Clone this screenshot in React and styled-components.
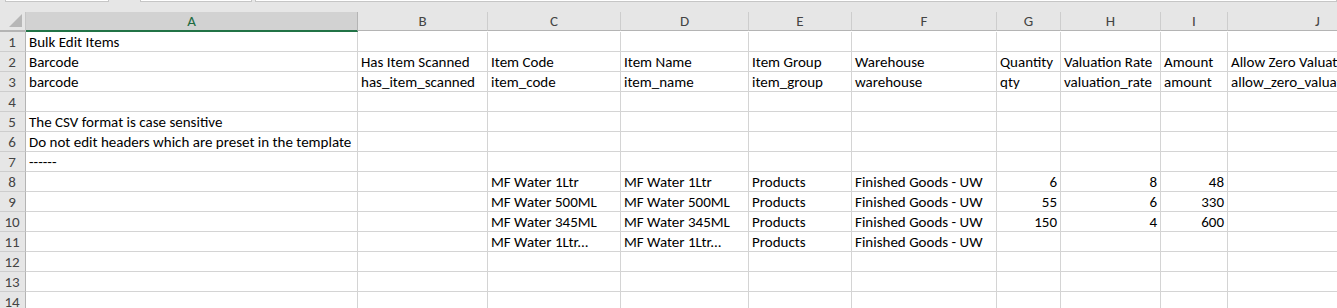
import styled, { createGlobalStyle } from 'styled-components';

const GlobalStyle = createGlobalStyle`
    html, body {
        margin: 0;
        padding: 0;
        background: #ffffff;
        overflow: hidden;
    }
`;

const COLUMNS = [
    { key: 'A', width: 332 },
    { key: 'B', width: 130 },
    { key: 'C', width: 133 },
    { key: 'D', width: 128 },
    { key: 'E', width: 103 },
    { key: 'F', width: 145 },
    { key: 'G', width: 64 },
    { key: 'H', width: 100 },
    { key: 'I', width: 67 },
    { key: 'J', width: 180 },
];

const ROWS = [
    ['Bulk Edit Items'],
    ['Barcode', 'Has Item Scanned', 'Item Code', 'Item Name', 'Item Group', 'Warehouse', 'Quantity', 'Valuation Rate', 'Amount', 'Allow Zero Valuation Rate'],
    ['barcode', 'has_item_scanned', 'item_code', 'item_name', 'item_group', 'warehouse', 'qty', 'valuation_rate', 'amount', 'allow_zero_valuation_rate'],
    [],
    ['The CSV format is case sensitive'],
    ['Do not edit headers which are preset in the template'],
    ['------'],
    ['', '', 'MF Water 1Ltr', 'MF Water 1Ltr', 'Products', 'Finished Goods - UW', 6, 8, 48],
    ['', '', 'MF Water 500ML', 'MF Water 500ML', 'Products', 'Finished Goods - UW', 55, 6, 330],
    ['', '', 'MF Water 345ML', 'MF Water 345ML', 'Products', 'Finished Goods - UW', 150, 4, 600],
    ['', '', 'MF Water 1Ltr...', 'MF Water 1Ltr...', 'Products', 'Finished Goods - UW'],
    [],
    [],
    [],
];

export default function App() {
    return <Window>
        <GlobalStyle />
        <FormulaStrip>
            <StripBox $width={102} />
            <StripBox $width={110} />
            <StripBox $grow />
        </FormulaStrip>
        <Sheet $columns={COLUMNS.map(c => `${c.width}px`).join(' ')}>
            <Corner>
                <svg width="13" height="13" viewBox="0 0 13 13">
                    <polygon points="13,0 13,13 0,13" fill="#b7b7b7" />
                </svg>
            </Corner>
            {COLUMNS.map(col => (
                <ColumnHeader key={col.key} $selected={col.key === 'A'}>{col.key}</ColumnHeader>
            ))}
            {ROWS.map((row, r) => [
                <RowHeader key={`h${r}`}>{r + 1}</RowHeader>,
                ...COLUMNS.map((col, c) => {
                    const value = row[c];
                    const numeric = typeof value === 'number';
                    return <Cell key={`${r}-${col.key}`} $numeric={numeric}>{value}</Cell>;
                }),
            ])}
        </Sheet>
    </Window>
}

const Window = styled.div`
    width: 1337px;
    height: 308px;
    overflow: hidden;
    background: #e6e6e6;
    font-family: Carlito, Lato, "Liberation Sans", sans-serif;
`;

const FormulaStrip = styled.div`
    display: flex;
    gap: 3px;
    height: 12px;
    padding-left: 5px;
    align-items: flex-start;
    background: #e6e6e6;
`;

const StripBox = styled.div`
    height: 1px;
    width: ${p => p.$grow ? 'auto' : `${p.$width}px`};
    flex: ${p => p.$grow ? '1' : 'none'};
    margin-right: ${p => p.$width === 102 ? '28px' : '0'};
    background: #ffffff;
    border: 1px solid #c6c6c6;
    border-top: none;
`;

const Sheet = styled.div`
    display: grid;
    grid-template-columns: 26px ${p => p.$columns};
    grid-template-rows: 20px;
    grid-auto-rows: 20px;
    background: #ffffff;
`;

const Corner = styled.div`
    background: #e6e6e6;
    border-right: 1px solid #c6c6c6;
    border-bottom: 2px solid #b4b4b4;
    display: flex;
    align-items: flex-end;
    justify-content: flex-end;
    padding: 0 3px 3px 0;
    box-sizing: border-box;
`;

const ColumnHeader = styled.div`
    box-sizing: border-box;
    background: ${p => p.$selected ? '#d2d2d2' : '#e6e6e6'};
    color: ${p => p.$selected ? '#1e6b41' : '#444444'};
    border-right: 1px solid ${p => p.$selected ? '#b4b4b4' : '#cdcdcd'};
    border-bottom: ${p => p.$selected ? '2px solid #217346' : '1px solid #b4b4b4'};
    margin-bottom: ${p => p.$selected ? '0' : '1px'};
    font-size: 15px;
    line-height: 18px;
    text-align: center;
`;

const RowHeader = styled.div`
    box-sizing: border-box;
    background: #e6e6e6;
    color: #444444;
    border-right: 1px solid #b4b4b4;
    border-bottom: 1px solid #cdcdcd;
    font-size: 15px;
    line-height: 20px;
    text-align: center;
    padding-right: 1px;
`;

const Cell = styled.div`
    box-sizing: border-box;
    border-right: 1px solid #d4d4d4;
    border-bottom: 1px solid #d4d4d4;
    padding: 0 3px;
    font-size: 15px;
    line-height: 20px;
    color: #000000;
    white-space: nowrap;
    overflow: hidden;
    text-align: ${p => p.$numeric ? 'right' : 'left'};
`;
